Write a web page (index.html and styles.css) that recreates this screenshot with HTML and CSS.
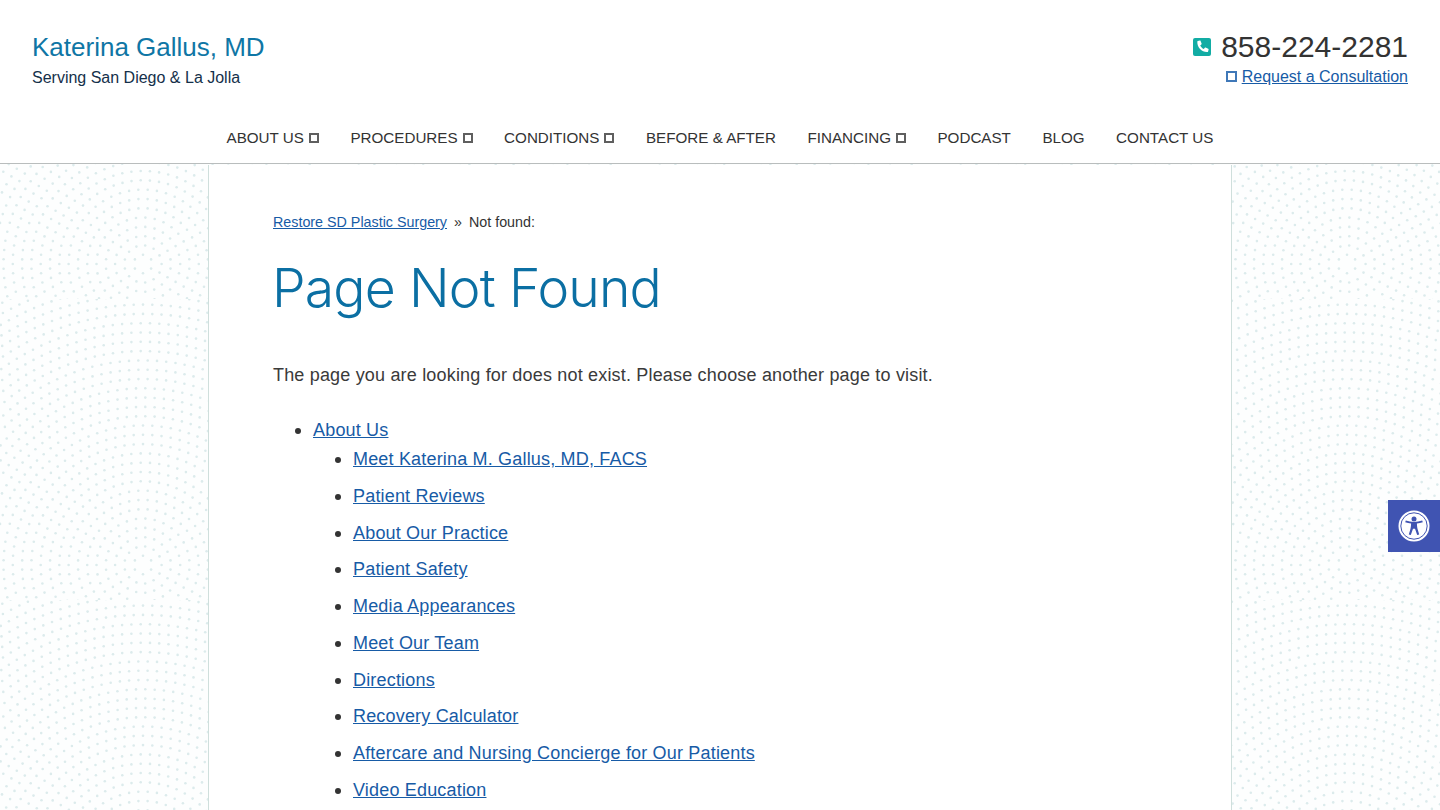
FILE: index.html
```html
<!DOCTYPE html>
<html>
<head>
    <meta charset="UTF-8">
    <title>Page Not Found</title>
    <link rel="stylesheet" href="styles.css">
</head>
<body>
<header class="site-header">
    <div class="header-top">
        <div class="brand">
            <a class="brand-name" href="#">Katerina Gallus, MD</a>
            <div class="brand-sub">Serving San Diego &amp; La Jolla</div>
        </div>
        <div class="contact">
            <div class="phone">
                <svg class="phone-icon" viewBox="0 0 18 18" width="18" height="18">
                    <rect width="18" height="18" rx="2" fill="#12aca4"/>
                    <path d="M4.900 3l1.900-.5c.4-.1.7.1.8.4l1 2.700c.1.3 0 .6-.2.8L7.200 7.400c.7 1.500 2 2.900 3.600 3.700l1-1.300c.2-.2.500-.3.800-.2l2.600 1.100c.3.100.5.400.4.800l-.5 1.900c-.1.300-.4.600-.7.600C8.900 14.300 4.100 9.500 4.300 3.700c0-.3.200-.6.600-.7z" fill="#fff"/>
                </svg>
                <span class="phone-num">858-224-2281</span>
            </div>
            <div class="consult"><span class="tofu tofu-blue"></span><a href="#">Request a Consultation</a></div>
        </div>
    </div>
    <nav class="main-nav">
        <a href="#">ABOUT US<span class="tofu"></span></a>
        <a href="#">PROCEDURES<span class="tofu"></span></a>
        <a href="#">CONDITIONS<span class="tofu"></span></a>
        <a href="#">BEFORE &amp; AFTER</a>
        <a href="#">FINANCING<span class="tofu"></span></a>
        <a href="#">PODCAST</a>
        <a href="#">BLOG</a>
        <a href="#">CONTACT US</a>
    </nav>
</header>

<main class="content">
    <div class="crumbs"><a href="#">Restore SD Plastic Surgery</a><span class="crumb-sep">»</span>Not found:</div>
    <h1>Page Not Found</h1>
    <p class="lead">The page you are looking for does not exist. Please choose another page to visit.</p>
    <ul class="sitemap">
        <li><a href="#">About Us</a>
            <ul>
                <li><a href="#">Meet Katerina M. Gallus, MD, FACS</a></li>
                <li><a href="#">Patient Reviews</a></li>
                <li><a href="#">About Our Practice</a></li>
                <li><a href="#">Patient Safety</a></li>
                <li><a href="#">Media Appearances</a></li>
                <li><a href="#">Meet Our Team</a></li>
                <li><a href="#">Directions</a></li>
                <li><a href="#">Recovery Calculator</a></li>
                <li><a href="#">Aftercare and Nursing Concierge for Our Patients</a></li>
                <li><a href="#">Video Education</a></li>
            </ul>
        </li>
    </ul>
</main>

<a class="a11y-btn" href="#" aria-label="Accessibility tools">
    <svg viewBox="0 0 32 32" width="32" height="32">
        <circle cx="16" cy="16" r="15.500" fill="#fff"/>
        <circle cx="16" cy="16" r="13.200" fill="none" stroke="#4054b2" stroke-width="1"/>
        <circle cx="16" cy="8.900" r="2.500" fill="#4054b2"/>
        <path d="M7.200 12.300l.6-1.800c2.700.9 5.400 1.400 8.200 1.400s5.500-.5 8.200-1.400l.6 1.800c-1.900.7-3.900 1.100-5.900 1.300.1 2.200.2 4 .8 5.900l1.500 5-2 .6-2.200-6.300h-2l-2.200 6.300-2-.6 1.500-5c.6-1.900.7-3.700.8-5.900-2-.2-4-.6-5.900-1.300z" fill="#4054b2"/>
    </svg>
</a>
<script src="pattern.js"></script>
</body>
</html>
```

FILE: styles.css
```css
/* page */
html, body {
    margin: 0;
    padding: 0;
}
body {
    height: 810px;
    overflow: hidden;
    font-family: "Liberation Sans", Arial, sans-serif;
    color: #333;
    background-color: #fdfefe;
    background-position: 0 -2px;
}
a {
    color: #175ba6;
}

/* header */
.site-header {
    background: #fff;
    border-bottom: 1px solid #b9bdbd;
    height: 163px;
}
.header-top {
    display: flex;
    justify-content: space-between;
    padding: 32px 32px 0;
    height: 84px;
}
.brand-name {
    display: block;
    font-size: 26px;
    line-height: 30px;
    color: #0f76a5;
    text-decoration: none;
}
.brand-sub {
    margin-top: 6px;
    font-size: 16px;
    line-height: 19px;
    color: #14304a;
}
.contact {
    text-align: right;
}
.phone {
    display: flex;
    justify-content: flex-end;
    align-items: center;
    gap: 10px;
    height: 30px;
}
.phone-icon {
    display: block;
}
.phone-num {
    font-size: 30px;
    line-height: 30px;
    color: #333;
}
.consult {
    margin-top: 5px;
    font-size: 16px;
    line-height: 19px;
}
.tofu {
    display: inline-block;
    width: 10px;
    height: 10px;
    box-sizing: border-box;
    border: 2px solid #5f5f5f;
    margin-left: 5px;
}
.tofu-blue {
    width: 11px;
    height: 11px;
    border-color: #3f78b8;
    margin: 0 5px 0 0;
}

/* nav */
.main-nav {
    display: flex;
    justify-content: center;
    gap: 31.500px;
    padding-top: 12px;
}
.main-nav a {
    font-size: 15.200px;
    line-height: 19px;
    color: #333;
    text-decoration: none;
}

/* content */
.content {
    box-sizing: border-box;
    width: 1024px;
    height: 645px;
    margin: 1px auto 0;
    padding: 49px 64px 0;
    background: #fff;
    border-left: 1px solid #cfdfdc;
    border-right: 1px solid #cfdfdc;
}
.crumbs {
    font-size: 14.300px;
    line-height: 17px;
    color: #333;
}
.crumb-sep {
    margin: 0 7px;
}
h1 {
    margin: 26px 0 0 -1px;
    font-family: Inter, "Liberation Sans", sans-serif;
    font-size: 53.500px;
    line-height: 62px;
    font-weight: 300;
    letter-spacing: -0.850px;
    color: #0b6fa3;
}
.lead {
    margin: 44px 0 0;
    font-size: 18px;
    line-height: 25px;
    letter-spacing: 0.180px;
    color: #3a3a3a;
}
.sitemap, .sitemap ul {
    list-style: none;
    margin: 0;
    padding-left: 40px;
}
.sitemap {
    margin-top: 30px;
    font-size: 18px;
    line-height: 25px;
    letter-spacing: 0.180px;
}
.sitemap li {
    position: relative;
}
/* bullet, bigger than the default disc */
.sitemap li::before {
    content: "";
    position: absolute;
    left: -18px;
    top: 10px;
    width: 6px;
    height: 6px;
    border-radius: 50%;
    background: #333;
}
.sitemap ul li {
    margin: 4px 0 11.780px;
}

/* accessibility button */
.a11y-btn {
    position: absolute;
    top: 500px;
    right: 0;
    width: 52px;
    height: 52px;
    background: #4054b2;
    display: flex;
    align-items: center;
    justify-content: center;
}
```

FILE: pattern.js
```js
// background tile: dots laid out on rings round one centre
var tile = 301, cx = 143, cy = 266, gap = 9.3;
var dots = '';
var ring = 1;
for (var r = gap; r < 340; r += gap) {
    var n = Math.round(2 * Math.PI * r / gap);
    for (var i = 0; i < n; i++) {
        var a = 2 * Math.PI * (i + (ring % 2) / 2) / n;
        var x = cx + r * Math.cos(a), y = cy + r * Math.sin(a);
        if (x > -2 && x < tile + 2 && y > -2 && y < tile + 2) {
            dots += '<circle cx="' + x.toFixed(1) + '" cy="' + y.toFixed(1) + '" r="1.3"/>';
        }
    }
    ring++;
}
var svg = '<svg xmlns="http://www.w3.org/2000/svg" width="' + tile + '" height="' + tile + '"><g fill="#dcebec">' + dots + '</g></svg>';
document.body.style.backgroundImage = 'url("data:image/svg+xml,' + encodeURIComponent(svg) + '")';
```
